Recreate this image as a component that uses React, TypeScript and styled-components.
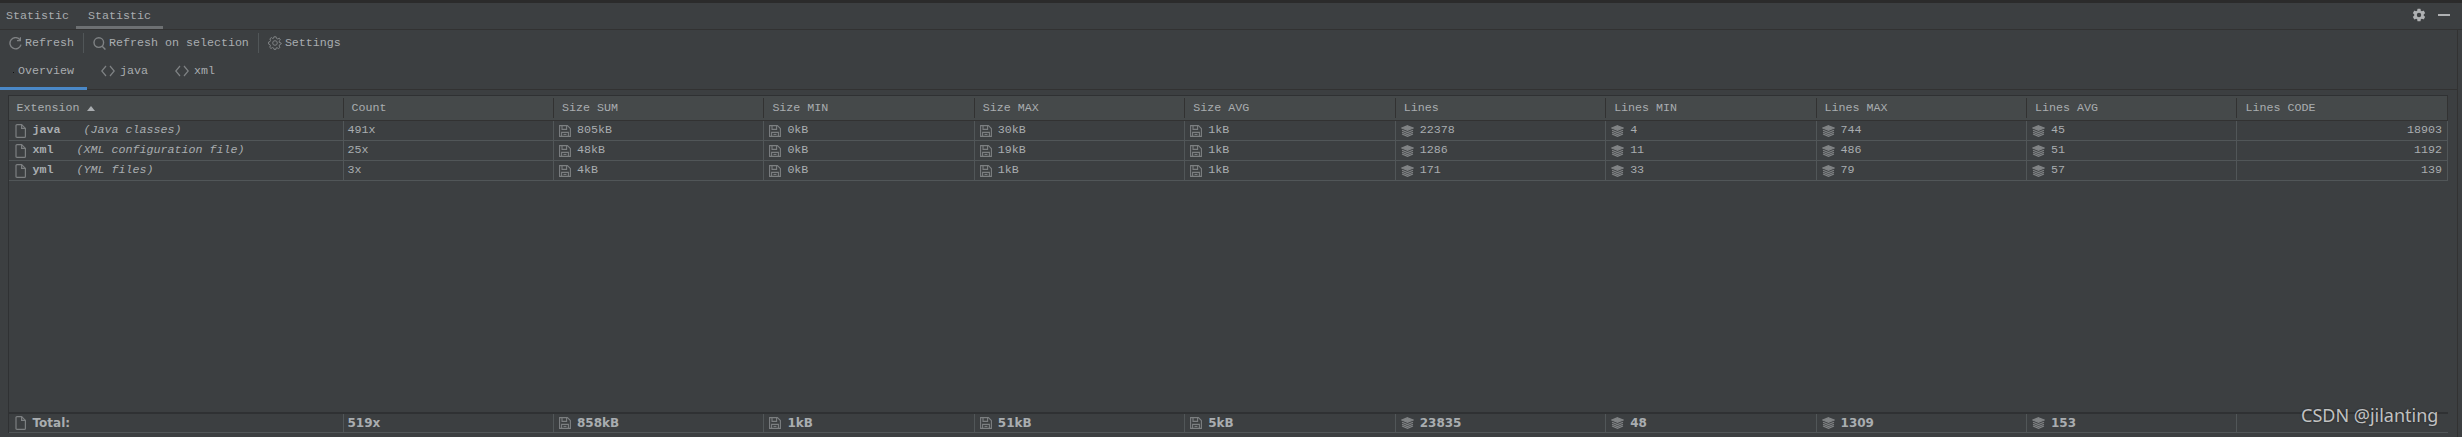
import React from "react";
import styled, { createGlobalStyle } from "styled-components";
import { IoSettingsSharp } from "react-icons/io5";

const GlobalStyle = createGlobalStyle`
  html, body {
    margin: 0;
    padding: 0;
    background: #3c3f41;
  }
`;

type CellKind = "size" | "lines" | "plain" | "right";

interface Column {
  title: string;
  kind: CellKind;
  values: string[];
  total: string;
}

const columns: Column[] = [
  { title: "Count", kind: "plain", values: ["491x", "25x", "3x"], total: "519x" },
  { title: "Size SUM", kind: "size", values: ["805kB", "48kB", "4kB"], total: "858kB" },
  { title: "Size MIN", kind: "size", values: ["0kB", "0kB", "0kB"], total: "1kB" },
  { title: "Size MAX", kind: "size", values: ["30kB", "19kB", "1kB"], total: "51kB" },
  { title: "Size AVG", kind: "size", values: ["1kB", "1kB", "1kB"], total: "5kB" },
  { title: "Lines", kind: "lines", values: ["22378", "1286", "171"], total: "23835" },
  { title: "Lines MIN", kind: "lines", values: ["4", "11", "33"], total: "48" },
  { title: "Lines MAX", kind: "lines", values: ["744", "486", "79"], total: "1309" },
  { title: "Lines AVG", kind: "lines", values: ["45", "51", "57"], total: "153" },
  { title: "Lines CODE", kind: "right", values: ["18903", "1192", "139"], total: "" },
];

const extensions = [
  { name: "java", description: "(Java classes)" },
  { name: "xml", description: "(XML configuration file)" },
  { name: "yml", description: "(YML files)" },
];

const FileIcon = () => (
  <svg width="11" height="14" viewBox="0 0 11 14" fill="none" stroke="#7c7f81" strokeWidth="1.2">
    <path d="M1 1.6 Q1 .6 2 .6 H6.6 L10.4 4.4 V12.4 Q10.4 13.4 9.4 13.4 H2 Q1 13.4 1 12.4 Z" />
    <path d="M6.6 .6 V4.4 H10.4" />
  </svg>
);

const SaveIcon = () => (
  <svg width="12" height="12" viewBox="0 0 12 12" fill="none" stroke="#7c7f81" strokeWidth="1.1">
    <path d="M.6 .6 H8.4 L11.4 3.6 V11.4 H.6 Z" />
    <path d="M3 .6 V4.4 H7.6 V.6" />
    <path d="M2.6 11.4 V7.4 H9.4 V11.4" />
    <path d="M4.5 9.4 H7.5" />
  </svg>
);

const StackIcon = () => (
  <svg width="13" height="12" viewBox="0 0 13 12" fill="none" stroke="#808385" strokeWidth="1.2">
    <path d="M6.5 .7 L12 3 L6.5 5.3 L1 3 Z" fill="#808385" />
    <path d="M1 5.2 L6.5 7.6 L12 5.2" />
    <path d="M1 7.2 L6.5 9.6 L12 7.2" />
    <path d="M1 9 L6.5 11.3 L12 9" />
  </svg>
);

const RefreshIcon = () => (
  <svg width="13" height="13" viewBox="0 0 13 13" fill="none" stroke="#7f8284" strokeWidth="1.4">
    <path d="M11 2.8 A5.6 5.6 0 1 0 12 7.6" />
    <path d="M11.4 .2 V3.6 H8" strokeWidth="1.2" />
  </svg>
);

const SearchIcon = () => (
  <svg width="13" height="13" viewBox="0 0 13 13" fill="none" stroke="#7f8284" strokeWidth="1.4">
    <circle cx="5.8" cy="5.6" r="4.8" />
    <path d="M9.2 9.2 L12.4 12.6" />
  </svg>
);

const GearIcon = () => (
  <svg width="14" height="14" viewBox="0 0 14 14" fill="none" stroke="#7f8284" strokeWidth="1">
    <path d="M5.9 .8 H8.1 L8.5 2.4 L9.8 3 L11.3 2.2 L12.4 3.9 L11.2 5 V6.4 L13.2 7 V8 L11.6 8.7 L11.1 10 L11.9 11.5 L10.3 12.6 L9 11.6 L8.1 12 L7.9 13.4 H6 L5.6 12 L4.4 11.5 L3 12.5 L1.6 11.2 L2.5 9.9 L2 8.6 L.6 8.1 V6 L2.1 5.5 L2.6 4.3 L1.8 2.9 L3.4 1.6 L4.7 2.5 L5.6 2.2 Z" />
    <circle cx="7" cy="7" r="2.3" />
  </svg>
);

const CodeIcon = () => (
  <svg width="14" height="12" viewBox="0 0 14 12" fill="none" stroke="#7f8284" strokeWidth="1.2">
    <path d="M5 1 L.8 6 L5 11" />
    <path d="M9 1 L13.2 6 L9 11" />
  </svg>
);

const CellIcon: React.FC<{ kind: CellKind }> = ({ kind }) => {
  if (kind === "size") return <SaveIcon />;
  if (kind === "lines") return <StackIcon />;
  return null;
};

const App: React.FC = () => {
  return (
    <Page>
      <GlobalStyle />
      <TopEdge />
      <ToolTabs>
        <ToolTab>Statistic</ToolTab>
        <ToolTab active>Statistic</ToolTab>
        <ToolActions>
          <IoSettingsSharp size={14} color="#afb1b3" />
          <MinusBar />
        </ToolActions>
      </ToolTabs>
      <Panel>
        <Toolbar>
          <ToolButton>
            <RefreshIcon />
            <Label>Refresh</Label>
          </ToolButton>
          <ToolSeparator />
          <ToolButton>
            <SearchIcon />
            <Label>Refresh on selection</Label>
          </ToolButton>
          <ToolSeparator />
          <ToolButton>
            <GearIcon />
            <Label>Settings</Label>
          </ToolButton>
        </Toolbar>
        <ViewTabs>
          <ViewTab active>
            <TabDot />
            <Label>Overview</Label>
          </ViewTab>
          <ViewTab>
            <CodeIcon />
            <Label>java</Label>
          </ViewTab>
          <ViewTab>
            <CodeIcon />
            <Label>xml</Label>
          </ViewTab>
        </ViewTabs>
        <TableArea>
          <Table>
            <HeaderRow>
              <HeaderCell>
                Extension
                <SortArrow />
              </HeaderCell>
              {columns.map((column) => (
                <HeaderCell key={column.title}>{column.title}</HeaderCell>
              ))}
            </HeaderRow>
            {extensions.map((extension, rowIndex) => (
              <DataRow key={extension.name}>
                <NameCell>
                  <FileIcon />
                  <NameText>
                    <b>{extension.name}</b>
                    {"   "}
                    <i>{extension.description}</i>
                  </NameText>
                </NameCell>
                {columns.map((column) => (
                  <DataCell key={column.title} kind={column.kind}>
                    <CellIcon kind={column.kind} />
                    <Label>{column.values[rowIndex]}</Label>
                  </DataCell>
                ))}
              </DataRow>
            ))}
            <EmptySpace />
            <TotalRow>
              <NameCell>
                <FileIcon />
                Total:
              </NameCell>
              {columns.map((column) => (
                <DataCell key={column.title} kind={column.kind}>
                  {column.total && <CellIcon kind={column.kind} />}
                  {column.total}
                </DataCell>
              ))}
            </TotalRow>
          </Table>
        </TableArea>
      </Panel>
      <Watermark>CSDN @jilanting</Watermark>
    </Page>
  );
};

export default App;

const mono = `"Liberation Mono", "Courier New", monospace`;
const gridColumns = `335px repeat(9, 210.45px) 1fr`;

const Page = styled.div`
  position: relative;
  width: 2462px;
  height: 437px;
  display: flex;
  flex-direction: column;
  overflow: hidden;
  background: #3c3f41;
  color: #a9adb0;
  font-family: ${mono};
  font-size: 11.67px;
`;

const TopEdge = styled.div`
  height: 3px;
  background: #2b2b2b;
`;

const Label = styled.span`
  line-height: 12px;
  margin-top: 1px;
  transform: translateY(-1px);
`;

const ToolTabs = styled.div`
  height: 26px;
  display: flex;
  align-items: stretch;
  border-bottom: 1px solid #323232;
`;

const ToolTab = styled.div<{ active?: boolean }>`
  display: flex;
  align-items: center;
  padding: 0 12px 1px ${({ active }) => (active ? "12px" : "6px")};
  width: ${({ active }) => (active ? "63px" : "58px")};
  white-space: nowrap;
  box-shadow: ${({ active }) => (active ? "inset 0 -3px 0 #6d7072" : "none")};
`;

const ToolActions = styled.div`
  margin-left: auto;
  display: flex;
  align-items: center;
  gap: 12px;
  padding-right: 12px;
  width: 50px;
  box-sizing: border-box;
  padding-bottom: 2px;
`;

const MinusBar = styled.div`
  width: 12px;
  height: 2px;
  background: #afb1b3;
`;

const Panel = styled.div`
  flex: 1;
  min-height: 0;
  display: flex;
  flex-direction: column;
  margin-right: 4px;
  border-right: 1px solid #323232;
`;

const Toolbar = styled.div`
  height: 26px;
  display: flex;
  align-items: center;
  padding-left: 9px;
`;

const ToolButton = styled.div`
  display: flex;
  align-items: center;
  gap: 3px;
  white-space: nowrap;
`;

const ToolSeparator = styled.div`
  width: 1px;
  height: 20px;
  margin: 0 9px;
  background: #515658;
`;

const ViewTabs = styled.div`
  height: 34px;
  box-sizing: border-box;
  display: flex;
  align-items: stretch;
  border-bottom: 1px solid #323232;
`;

const ViewTab = styled.div<{ active?: boolean }>`
  position: relative;
  display: flex;
  align-items: center;
  gap: 5px;
  padding: 0 13px 4px;
  padding-left: ${({ active }) => (active ? "18px" : "14px")};
  height: 34px;
  box-sizing: border-box;
  white-space: nowrap;
  box-shadow: ${({ active }) => (active ? "inset 0 -3px 0 #4a88c7" : "none")};
`;

const TabDot = styled.span`
  position: absolute;
  left: 13px;
  top: 16px;
  width: 1px;
  height: 1px;
  background: #111;
`;

const TableArea = styled.div`
  flex: 1;
  min-height: 0;
  padding: 5px 9px 4px 8px;
  display: flex;
`;

const Table = styled.div`
  flex: 1;
  display: flex;
  flex-direction: column;
  border-left: 1px solid #2f3133;
  border-top: 1px solid #2f3133;
  margin-left: -0.5px;
`;

const HeaderRow = styled.div`
  display: grid;
  grid-template-columns: ${gridColumns};
  height: 24px;
  background: #45494a;
  border-bottom: 1px solid #323232;
  border-right: 1px solid #323232;
`;

const HeaderCell = styled.div`
  display: flex;
  align-items: center;
  gap: 8px;
  padding-left: 8px;
  box-sizing: border-box;
  white-space: nowrap;
  margin: 2px 0;
  border-right: 1px solid #323232;
  &:last-child {
    border-right: none;
  }
`;

const SortArrow = styled.span`
  width: 0;
  height: 0;
  border-left: 4px solid transparent;
  border-right: 4px solid transparent;
  border-bottom: 5px solid #a9adb0;
`;

const DataRow = styled.div`
  display: grid;
  grid-template-columns: ${gridColumns};
  height: 20px;
  box-sizing: border-box;
  border-bottom: 1px solid #515658;
  border-right: 1px solid #515658;
`;

const NameCell = styled.div`
  display: flex;
  align-items: center;
  gap: 7px;
  padding-left: 6px;
  box-sizing: border-box;
  border-right: 1px solid #515658;
`;

const NameText = styled.span`
  white-space: pre;
  line-height: 12px;
  transform: translateY(-1px);
  b {
    font-weight: bold;
  }
  i {
    margin-left: 2px;
  }
`;

const DataCell = styled.div<{ kind: CellKind }>`
  display: flex;
  align-items: center;
  justify-content: ${({ kind }) => (kind === "right" ? "flex-end" : "flex-start")};
  gap: 6px;
  box-sizing: border-box;
  padding: 0 5px 0 ${({ kind }) => (kind === "plain" ? "4px" : "5px")};
  border-right: 1px solid #515658;
  white-space: nowrap;
  &:last-child {
    border-right: none;
  }
`;

const EmptySpace = styled.div`
  flex: 1;
`;

const TotalRow = styled.div`
  display: grid;
  grid-template-columns: ${gridColumns};
  height: 21px;
  box-sizing: border-box;
  border-top: 2px solid #2f3133;
  border-bottom: 1px solid #515658;
  font-family: "DejaVu Sans", sans-serif;
  font-weight: bold;
  font-size: 12px;
`;

const Watermark = styled.div`
  position: absolute;
  left: 2301px;
  top: 403px;
  font-family: "Noto Sans", sans-serif;
  font-size: 18px;
  color: rgba(255, 255, 255, 0.72);
  text-shadow: 0 0 2px rgba(0, 0, 0, 0.5);
  white-space: nowrap;
`;
